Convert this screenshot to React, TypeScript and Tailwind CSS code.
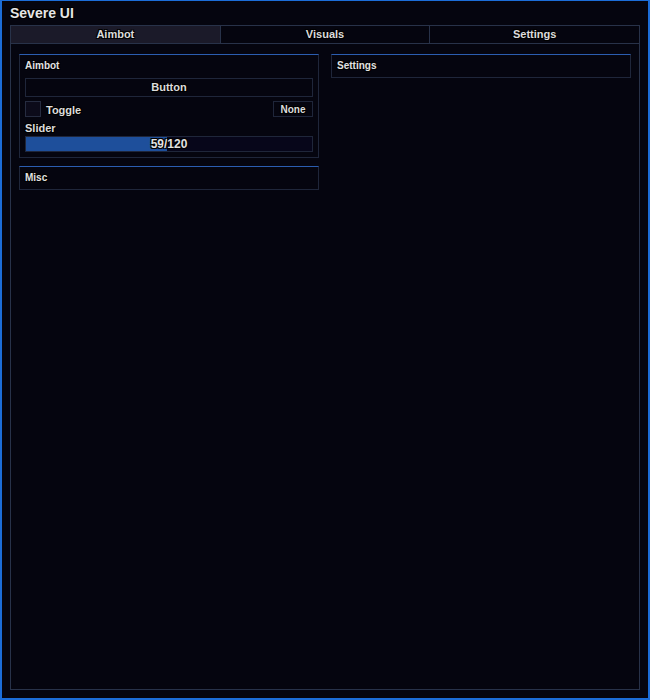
import { useState } from 'react'

const TABS = ['Aimbot', 'Visuals', 'Settings']

const font = 'font-["Liberation_Sans",Arial,sans-serif] font-bold'
const shadow = '[text-shadow:1px_1px_0_#000,-1px_-1px_0_#000,1px_-1px_0_#000,-1px_1px_0_#000]'

function Group({ title, children }: { title: string; children?: React.ReactNode }) {
  return (
    <div className="border border-[#1f263a] border-t-[#2b5db0] px-[5px] pt-[4px] pb-[5px]">
      <div className={`text-[10px] leading-[13px] text-[#e2e2e2] ${shadow}`}>{title}</div>
      {children}
    </div>
  )
}

export default function App() {
  const [tab, setTab] = useState('Aimbot')
  const [toggle, setToggle] = useState(false)
  const value = 59
  const max = 120

  return (
    <div className={`w-[650px] h-[700px] bg-[#05050f] border-2 border-t border-[#1c6dd8] px-[8px] flex flex-col ${font}`}>
      <div className={`h-[24px] flex items-center text-[14px] leading-[16px] text-[#e6e6e6] ${shadow}`}>Severe UI</div>

      <div className="flex h-[18px] border-t border-x border-[#283249]">
        {TABS.map((t, i) => (
          <button
            key={t}
            onClick={() => setTab(t)}
            className={`flex-1 flex items-center justify-center pb-[1px] text-[11px] leading-[14px] text-[#dcdcdc] ${shadow} ${
              i < TABS.length - 1 ? 'border-r border-[#283249]' : ''
            } ${tab === t ? 'bg-[#1b1a29]' : ''}`}
          >
            {t}
          </button>
        ))}
      </div>

      <div className="flex-1 border border-[#283249] px-[8px] pt-[10px] mb-[8px] flex gap-[12px] items-start">
        <div className="w-[300px] flex flex-col gap-[8px]">
          <Group title="Aimbot">
            <button className={`mt-[6px] w-full h-[19px] border border-[#1f263a] flex items-center justify-center text-[11px] text-[#dcdcdc] ${shadow}`}>
              Button
            </button>
            <div className="mt-[4px] h-[16px] flex items-center">
              <button
                onClick={() => setToggle(!toggle)}
                className={`w-[16px] h-[16px] border border-[#262c40] ${toggle ? 'bg-[#1e4f9b]' : 'bg-[#0c0b1a]'}`}
              />
              <span className={`ml-[5px] mt-[2px] text-[11px] leading-[14px] text-[#dcdcdc] ${shadow}`}>Toggle</span>
              <div className={`ml-auto w-[40px] h-[16px] border border-[#1f263a] flex items-center justify-center text-[10px] text-[#dcdcdc] ${shadow}`}>
                None
              </div>
            </div>
            <div className={`mt-[4px] text-[11px] leading-[14px] text-[#dcdcdc] ${shadow}`}>Slider</div>
            <div className="mt-[1px] relative h-[16px] border border-[#1f263a] bg-[#07061a]">
              <div className="h-full bg-[#1e4f9b]" style={{ width: `${(value / max) * 100}%` }} />
              <div className={`absolute inset-0 flex items-center justify-center text-[12px] leading-[14px] text-[#e2e2e2] ${shadow}`}>
                {value}/{max}
              </div>
            </div>
          </Group>
          <Group title="Misc" />
        </div>
        <div className="w-[300px] flex flex-col gap-[8px]">
          <Group title="Settings" />
        </div>
      </div>
    </div>
  )
}
